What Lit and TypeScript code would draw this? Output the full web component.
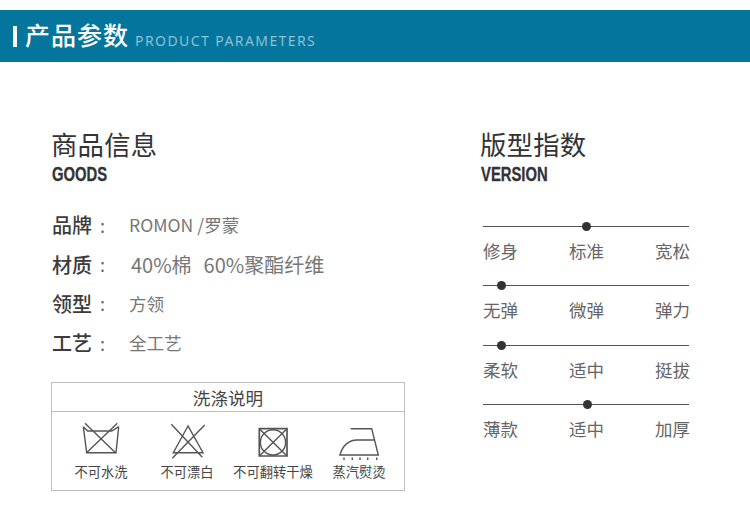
import { LitElement, html, css } from "lit";
import { customElement } from "lit/decorators.js";

const specs = [
  { k: "品牌", v: "ROMON /罗蒙", wide: false },
  { k: "材质", v: "40%棉  60%聚酯纤维", wide: true },
  { k: "领型", v: "方领", wide: false },
  { k: "工艺", v: "全工艺", wide: false },
];

const sliders = [
  { pos: 50, labels: ["修身", "标准", "宽松"] },
  { pos: 9, labels: ["无弹", "微弹", "弹力"] },
  { pos: 9, labels: ["柔软", "适中", "挺拔"] },
  { pos: 50.5, labels: ["薄款", "适中", "加厚"] },
];

@customElement("app-root")
export class AppRoot extends LitElement {
  static styles = css`
    :host { display: block; width: 750px; height: 513px; background: #fff; overflow: hidden; font-family: "Noto Sans CJK SC", "Noto Sans", sans-serif; color: #444; }
    .banner { margin-top: 10px; height: 52px; background: #04759c; display: flex; align-items: center; padding-left: 13px; box-sizing: border-box; }
    .bar { width: 4px; height: 21px; background: #fff; margin-right: 8px; }
    .banner h1 { margin: -4px 0 0; font-size: 25px; font-weight: 500; color: #fff; letter-spacing: 1px; line-height: 48px; }
    .banner span { margin-left: 6px; margin-top: 8px; font-size: 14px; color: #8fc0d3; letter-spacing: 1.42px; font-family: "Noto Sans", sans-serif; font-weight: 400; }
    .cols { display: flex; padding: 65px 0 0 51px; }
    .left { width: 354px; margin-right: 75px; }
    .right { width: 211px; }
    h2 { margin: 0; font-size: 26.4px; line-height: 34px; font-weight: 400; color: #333; letter-spacing: 0.2px; }
    .en { font-family: "Liberation Sans", sans-serif; font-weight: 700; font-size: 19.5px; line-height: 22px; height: 22px; color: #333; margin: 2px 0 0 1px; transform: scaleX(0.76); transform-origin: left center; -webkit-text-stroke: 0.3px #333; }
    .specs { margin-top: 20px; display: flex; flex-direction: column; }
    .spec { display: flex; align-items: center; height: 39.4px; padding-left: 1px; }
    .k { width: 42px; font-size: 20px; font-weight: 500; color: #3c3c3c; }
    .c { width: 35px; font-size: 18px; color: #666; padding-left: 6px; box-sizing: border-box; }
    .v { font-size: 17.6px; color: #777; white-space: pre; }
    .v.wide { font-size: 20px; padding-left: 2px; word-spacing: 1.5px; }
    .care { margin-top: 19px; border: 1px solid #bdbdbd; height: 109px; box-sizing: border-box; }
    .care-h { height: 28px; border-bottom: 1px solid #bdbdbd; text-align: center; font-size: 17.6px; line-height: 30px; color: #444; }
    .care-b { display: flex; padding: 10px 0 0 0; }
    .item { width: 86px; display: flex; flex-direction: column; align-items: center; flex: none; font-size: 13.3px; color: #444; white-space: nowrap; }
    .item:first-child { margin-left: 6px; }
    .item svg { display: block; width: 44px; height: 38px; fill: none; stroke: #555; stroke-width: 1.4; }
    .item div { margin-top: 2px; line-height: 20px; }
    .sliders { margin-top: 41px; padding-left: 3px; }
    .slider { height: 59.4px; }
    .track { position: relative; height: 1px; background: #555; width: 206px; }
    .dot { position: absolute; top: -4px; width: 9px; height: 9px; margin-left: -4.5px; border-radius: 50%; background: #333; }
    .labels { display: flex; justify-content: space-between; width: 207px; margin-top: 12px; font-size: 17.5px; line-height: 24px; color: #666; }
  `;

  render() {
    return html`
      <div class="banner">
        <div class="bar"></div>
        <h1>产品参数</h1>
        <span>PRODUCT PARAMETERS</span>
      </div>
      <div class="cols">
        <div class="left">
          <h2>商品信息</h2>
          <div class="en">GOODS</div>
          <div class="specs">
            ${specs.map(
              (s) => html`<div class="spec">
                <div class="k">${s.k}</div>
                <div class="c">:</div>
                <div class="v ${s.wide ? "wide" : ""}">${s.v}</div>
              </div>`
            )}
          </div>
          <div class="care">
            <div class="care-h">洗涤说明</div>
            <div class="care-b">
              <div class="item">
                <svg viewBox="0 0 44 38"><path d="M4.3 4.7 7.7 30.7H37L39.7 4.7M4.3 4.7 8.7 9H32.7L39.7 4.7M6 1.3 37 31.3M38.3 1.3 7 31.3"/></svg>
                <div>不可水洗</div>
              </div>
              <div class="item">
                <svg viewBox="0 0 44 38"><path d="M23 4 8.3 30.7H38ZM6.3 2.3 37.3 35.3M39.7 3 7.3 36.3"/></svg>
                <div>不可漂白</div>
              </div>
              <div class="item">
                <svg viewBox="0 0 44 38"><path stroke-width="1.7" d="M8.3 6.7H36V34H8.3Z"/><circle cx="22" cy="20.4" r="12.6"/><path d="M8.3 6.7 36 34M36 6.7 8.3 34"/></svg>
                <div>不可翻转干燥</div>
              </div>
              <div class="item">
                <svg viewBox="0 0 44 38"><path d="M13.7 6.7H34.7L41.3 33H3C5 24 12 18 20 18H38M7 35.5V38M15.3 35.5V38M23 35.5V38M30.7 35.5V38M39.7 35.5V38"/></svg>
                <div>蒸汽熨烫</div>
              </div>
            </div>
          </div>
        </div>
        <div class="right">
          <h2>版型指数</h2>
          <div class="en">VERSION</div>
          <div class="sliders">
            ${sliders.map(
              (s) => html`<div class="slider">
                <div class="track"><div class="dot" style="left:${s.pos}%"></div></div>
                <div class="labels">${s.labels.map((l) => html`<span>${l}</span>`)}</div>
              </div>`
            )}
          </div>
        </div>
      </div>
    `;
  }
}
